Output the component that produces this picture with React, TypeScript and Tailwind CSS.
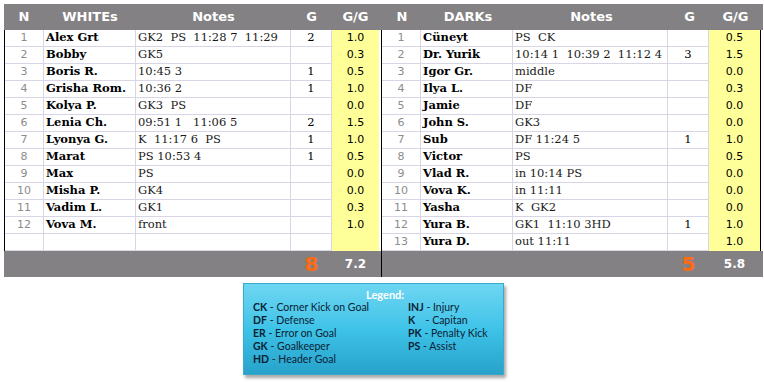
import React from "react";

type Row = { name: string; notes: string; g: string; gg: string };

const whites: Row[] = [
  { name: "Alex Grt", notes: "GK2  PS  11:28 7  11:29", g: "2", gg: "1.0" },
  { name: "Bobby", notes: "GK5", g: "", gg: "0.3" },
  { name: "Boris R.", notes: "10:45 3", g: "1", gg: "0.5" },
  { name: "Grisha Rom.", notes: "10:36 2", g: "1", gg: "1.0" },
  { name: "Kolya P.", notes: "GK3  PS", g: "", gg: "0.0" },
  { name: "Lenia Ch.", notes: "09:51 1   11:06 5", g: "2", gg: "1.5" },
  { name: "Lyonya G.", notes: "K  11:17 6  PS", g: "1", gg: "1.0" },
  { name: "Marat", notes: "PS 10:53 4", g: "1", gg: "0.5" },
  { name: "Max", notes: "PS", g: "", gg: "0.0" },
  { name: "Misha P.", notes: "GK4", g: "", gg: "0.0" },
  { name: "Vadim L.", notes: "GK1", g: "", gg: "0.3" },
  { name: "Vova M.", notes: "front", g: "", gg: "1.0" },
];

const darks: Row[] = [
  { name: "Cüneyt", notes: "PS  CK", g: "", gg: "0.5" },
  { name: "Dr. Yurik", notes: "10:14 1  10:39 2  11:12 4", g: "3", gg: "1.5" },
  { name: "Igor Gr.", notes: "middle", g: "", gg: "0.0" },
  { name: "Ilya L.", notes: "DF", g: "", gg: "0.3" },
  { name: "Jamie", notes: "DF", g: "", gg: "0.0" },
  { name: "John S.", notes: "GK3", g: "", gg: "0.0" },
  { name: "Sub", notes: "DF 11:24 5", g: "1", gg: "1.0" },
  { name: "Victor", notes: "PS", g: "", gg: "0.5" },
  { name: "Vlad R.", notes: "in 10:14 PS", g: "", gg: "0.0" },
  { name: "Vova K.", notes: "in 11:11", g: "", gg: "0.0" },
  { name: "Yasha", notes: "K  GK2", g: "", gg: "0.0" },
  { name: "Yura B.", notes: "GK1  11:10 3HD", g: "1", gg: "1.0" },
  { name: "Yura D.", notes: "out 11:11", g: "", gg: "1.0" },
];

const legendLeft = [
  ["CK", "Corner Kick on Goal"],
  ["DF", "Defense"],
  ["ER", "Error on Goal"],
  ["GK", "Goalkeeper"],
  ["HD", "Header Goal"],
];

const legendRight = [
  ["INJ", "Injury"],
  ["K   ", "Capitan"],
  ["PK", "Penalty Kick"],
  ["PS", "Assist"],
];

const sans = "font-['DejaVu_Sans',sans-serif]";
const serif = "font-['DejaVu_Serif',serif]";
const grid = "border-[#d8d5e6]";

function Team({
  title,
  rows,
  goals,
  total,
  left,
}: {
  title: string;
  rows: Row[];
  goals: string;
  total: string;
  left: boolean;
}) {
  const ggW = left ? "w-[49px] border-r-2 border-white" : "w-[52px] border-r border-black";
  const ggHead = left ? "w-[49px]" : "w-[53px]";
  const filled = [...rows];
  while (filled.length < 13) filled.push({ name: "", notes: "", g: "", gg: "" });

  return (
    <div className="flex flex-col">
      {/* header */}
      <div className={`flex h-[26px] items-center bg-[#838183] text-white font-bold text-[13px] ${sans} ${left ? "" : "pl-px"}`}>
        <div className="w-[40px] text-center">N</div>
        <div className="w-[92px] text-center">{title}</div>
        <div className="w-[155px] text-center">Notes</div>
        <div className="w-[41px] text-center">G</div>
        <div className={`${ggHead} text-center pr-[2px]`}>G/G</div>
      </div>

      {/* rows */}
      <div className="flex flex-col border-l border-black">
        {filled.map((r, i) => (
          <div key={i} className="flex h-[17px]">
            <div className={`w-[39px] border-r border-b ${grid} flex items-center justify-center text-[11px] text-[#8c8c8c] ${sans}`}>
              {r.name ? i + 1 : ""}
            </div>
            <div className={`w-[92px] border-r border-b ${grid} flex items-center pl-[2px] text-[11.5px] font-bold text-black ${serif} whitespace-nowrap overflow-hidden`}>
              {r.name}
            </div>
            <div className={`w-[155px] border-r border-b ${grid} flex items-center pl-[2px] text-[11.5px] text-[#1a1a1a] ${serif} whitespace-pre overflow-hidden`}>
              {r.notes}
            </div>
            <div className={`w-[41px] border-r border-b ${grid} flex items-center justify-center text-[11.5px] text-black ${serif}`}>
              {r.g}
            </div>
            <div className={`${ggW} bg-[#ffff99] flex items-center justify-center text-[11px] text-black ${sans}`}>
              {r.gg}
            </div>
          </div>
        ))}
      </div>

      {/* totals */}
      <div className={`flex h-[26px] items-center bg-[#838183] ${left ? "" : "border-l border-black"}`}>
        <div className={left ? "w-[287px]" : "w-[286px]"} />
        <div className={`w-[41px] text-center text-[20px] font-bold text-[#ff6a13] ${sans}`}>{goals}</div>
        <div className={`${ggHead} text-center text-[12px] font-bold text-white pr-[2px] ${sans}`}>{total}</div>
      </div>
    </div>
  );
}

export default function App() {
  return (
    <div className="w-[764px] h-[382px] bg-white overflow-hidden">
      <div className="flex pt-[4px] pl-[4px]">
        <Team title="WHITEs" rows={whites} goals="8" total="7.2" left />
        <Team title="DARKs" rows={darks} goals="5" total="5.8" left={false} />
      </div>

      <div
        className="ml-[243px] mt-[6px] w-[261px] h-[92px] bg-gradient-to-b from-[#6dd6f2] via-[#3ec3e8] to-[#27a2cb] border border-[#3aa9cc] shadow-[2px_3px_3px_rgba(0,0,0,0.35)] pt-[4px] font-['Lato',sans-serif] text-[10.5px] leading-[13px] text-[#0b2233]"
      >
        <div className="pl-[122px] font-bold text-white text-[11px]">Legend:</div>
        <div className="flex pl-[9px]">
          <div className="w-[155px] flex flex-col">
            {legendLeft.map(([k, v]) => (
              <div key={k} className="whitespace-pre">
                <span className="font-bold">{k}</span> - {v}
              </div>
            ))}
          </div>
          <div className="flex flex-col">
            {legendRight.map(([k, v]) => (
              <div key={k} className="whitespace-pre">
                <span className="font-bold">{k}</span> - {v}
              </div>
            ))}
          </div>
        </div>
      </div>
    </div>
  );
}
